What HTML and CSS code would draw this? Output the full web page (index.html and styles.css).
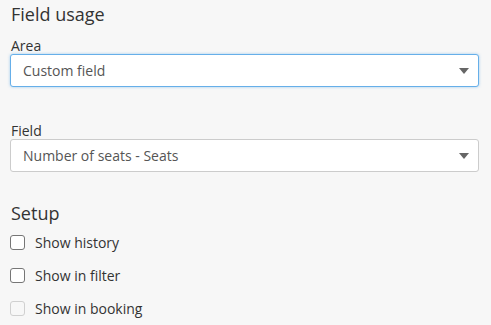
FILE: index.html
```html
<!DOCTYPE html>
<html lang="en">
<head>
  <meta charset="UTF-8">
  <title>Field usage</title>
  <link rel="stylesheet" href="styles.css">
</head>
<body>
  <div class="panel">
    <h3>Field usage</h3>
    <div class="form-group">
      <label class="field-label">Area</label>
      <div class="select-wrap focused">
        <span class="select-text">Custom field</span>
        <span class="caret"></span>
      </div>
    </div>
    <div class="form-group last">
      <label class="field-label">Field</label>
      <div class="select-wrap">
        <span class="select-text">Number of seats - Seats</span>
        <span class="caret"></span>
      </div>
    </div>

    <h3 class="setup">Setup</h3>
    <label class="check"><span class="box"></span>Show history</label>
    <label class="check"><span class="box"></span>Show in filter</label>
    <label class="check disabled"><span class="box"></span>Show in booking</label>
  </div>
</body>
</html>
```

FILE: styles.css
```css
body {
  margin: 0;
  background: #f7f7f7;
  font-family: "Open Sans", Arial, sans-serif;
  color: #333;
}

.panel {
  padding: 0 12px 0 10px;
}

h3 {
  font-size: 18px;
  font-weight: 400;
  margin: 0;
  padding: 2px 0 0 1px;
  line-height: 24px;
}

.form-group {
  margin-top: 12px;
  margin-bottom: 36px;
}

.form-group.last {
  margin-bottom: 29px;
}

.field-label {
  display: block;
  font-size: 14px;
  line-height: 16px;
  padding-left: 1px;
}

.select-wrap {
  height: 31px;
  border: 1px solid #ccc;
  border-radius: 3px;
  background: #fff;
  display: flex;
  align-items: center;
  padding: 0 12px;
  justify-content: space-between;
}

.select-wrap.focused {
  border-color: #66afe9;
  box-shadow: 0 0 3px rgba(102, 175, 233, 0.6);
}

.select-text {
  font-size: 14px;
  color: #555;
}

.caret {
  width: 0;
  height: 0;
  border-left: 5px solid transparent;
  border-right: 5px solid transparent;
  border-top: 6px solid #666;
  margin-right: -3px;
}

.setup {
  padding-top: 0;
  margin-bottom: 1px;
}

.check {
  display: flex;
  align-items: center;
  font-size: 14px;
  height: 33px;
  color: #333;
}

.check .box {
  width: 13px;
  height: 13px;
  border: 1px solid #767676;
  border-radius: 3px;
  background: #fff;
  margin-right: 10px;
}

.check.disabled .box {
  border-color: #d0d0d0;
  background: #f7f7f7;
}
```
